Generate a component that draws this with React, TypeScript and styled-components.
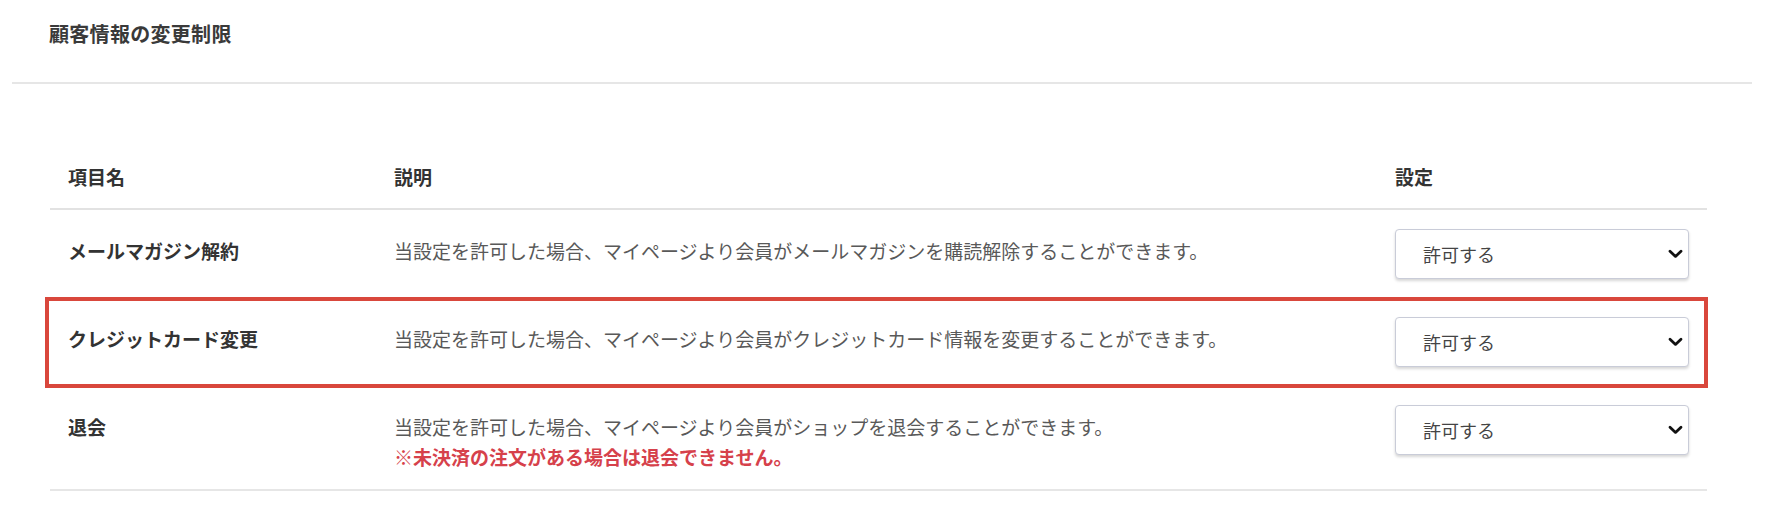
import React, { useState } from 'react';
import styled, { createGlobalStyle } from 'styled-components';

const GlobalStyle = createGlobalStyle`
  body {
    margin: 0;
    background: #fff;
    font-family: "Noto Sans CJK JP", "Noto Sans", sans-serif;
    color: #333;
  }
`;

interface IRestriction {
  id: string;
  name: string;
  description: string;
  note?: string;
  highlighted?: boolean;
}

const restrictions: IRestriction[] = [
  {
    id: 'mail',
    name: 'メールマガジン解約',
    description: '当設定を許可した場合、マイページより会員がメールマガジンを購読解除することができます。',
  },
  {
    id: 'card',
    name: 'クレジットカード変更',
    description: '当設定を許可した場合、マイページより会員がクレジットカード情報を変更することができます。',
    highlighted: true,
  },
  {
    id: 'withdraw',
    name: '退会',
    description: '当設定を許可した場合、マイページより会員がショップを退会することができます。',
    note: '※未決済の注文がある場合は退会できません。',
  },
];

const Chevron = () => (
  <svg width="15" height="10" viewBox="0 0 15 10" fill="none">
    <path d="M2 2.2L7.5 7.4L13 2.2" stroke="#111" strokeWidth="2.8" strokeLinecap="round" strokeLinejoin="round" />
  </svg>
);

const SettingSelect = () => {
  const [value, setValue] = useState('allow');
  return (
    <StyledSelectWrap>
      <select value={value} onChange={(e) => setValue(e.target.value)}>
        <option value="allow">許可する</option>
        <option value="deny">許可しない</option>
      </select>
      <span className="arrow">
        <Chevron />
      </span>
    </StyledSelectWrap>
  );
};

const RestrictionRow = ({ data }: { data: IRestriction }) => (
  <StyledRow $highlighted={data.highlighted}>
    <div className="name">{data.name}</div>
    <div className="description">
      {data.description}
      {data.note && <div className="note">{data.note}</div>}
    </div>
    <div className="setting">
      <SettingSelect />
    </div>
  </StyledRow>
);

export default function App() {
  return (
    <>
      <GlobalStyle />
      <StyledPage>
        <StyledTitleBar>顧客情報の変更制限</StyledTitleBar>
        <StyledTable>
          <StyledHeadRow>
            <div className="name">項目名</div>
            <div>説明</div>
            <div>設定</div>
          </StyledHeadRow>
          {restrictions.map((r) => (
            <RestrictionRow key={r.id} data={r} />
          ))}
        </StyledTable>
      </StyledPage>
    </>
  );
}

const StyledPage = styled.div`
  padding: 0 28px 0 12px;
`;

const StyledTitleBar = styled.div`
  padding: 19px 37px 33px;
  font-size: 20px;
  line-height: 30px;
  font-weight: 700;
  color: #3a3a3a;
  letter-spacing: 0.3px;
  border-bottom: 2px solid #e6e6e6;
`;

const StyledTable = styled.div`
  margin: 66px 45px 0 38px;
  border-bottom: 2px solid #e6e6e6;
`;

const StyledHeadRow = styled.div`
  display: grid;
  grid-template-columns: 344px 1fr 312px;
  padding: 12px 0 17px;
  border-bottom: 2px solid #e2e2e2;
  font-size: 19px;
  line-height: 29px;
  font-weight: 700;
  color: #333;

  .name {
    padding-left: 18px;
  }
`;

const StyledRow = styled.div<{ $highlighted?: boolean }>`
  position: relative;
  display: grid;
  grid-template-columns: 344px 1fr 312px;
  align-items: start;
  padding: 19px 0 17px;

  ${({ $highlighted }) =>
    $highlighted &&
    `
    &::after {
      content: '';
      position: absolute;
      top: -1px;
      bottom: -2px;
      left: -5px;
      right: -1px;
      border: 4px solid #d9473c;
      pointer-events: none;
    }
  `}

  .name {
    padding: 7px 0 0 18px;
    font-size: 19px;
    line-height: 30px;
    font-weight: 700;
    color: #333;
  }

  .description {
    padding-top: 7px;
    font-size: 19px;
    line-height: 30px;
    color: #595959;
  }

  .note {
    font-weight: 700;
    color: #d6414b;
  }

  .setting {
    padding-right: 18px;
  }
`;

const StyledSelectWrap = styled.div`
  position: relative;
  width: 294px;
  height: 50px;
  margin-bottom: 2px;

  select {
    appearance: none;
    width: 100%;
    height: 100%;
    padding: 0 40px 0 27px;
    border: 1px solid #c9ccd8;
    border-radius: 4px;
    background: #fff;
    box-shadow: 0 2px 3px rgba(0, 0, 0, 0.16);
    font-family: "Noto Sans CJK JP", sans-serif;
    font-size: 18px;
    color: #444;
    cursor: pointer;
  }

  .arrow {
    position: absolute;
    right: 6px;
    top: 50%;
    transform: translateY(-50%);
    display: flex;
    pointer-events: none;
  }
`;
